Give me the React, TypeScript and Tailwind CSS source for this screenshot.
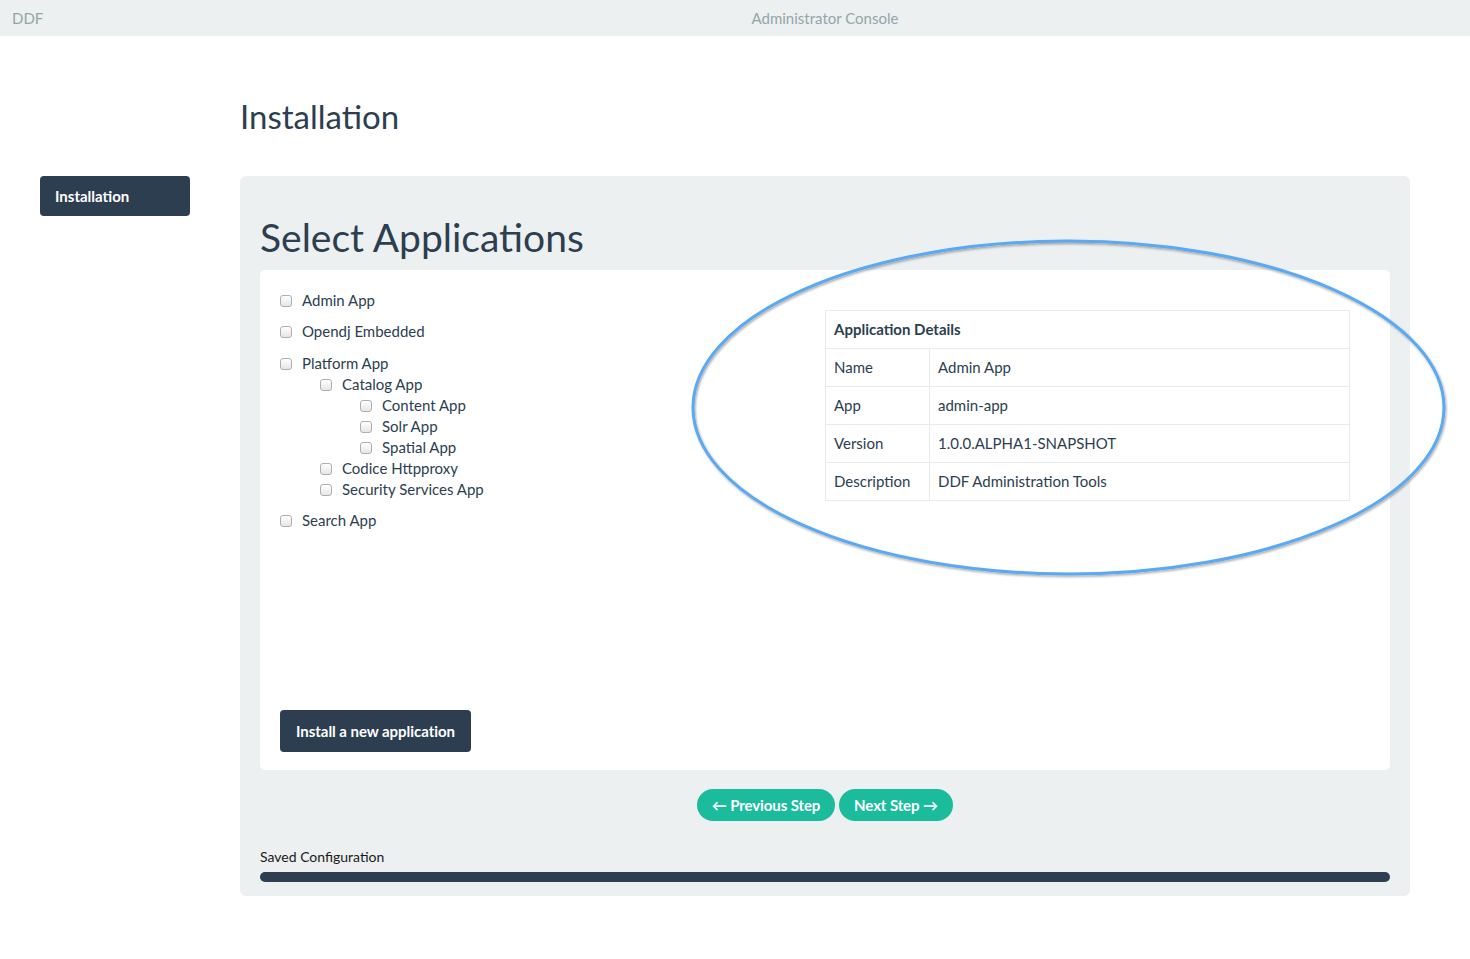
import React from "react";

function Check() {
  return (
    <span className="inline-block w-[12px] h-[12px] shrink-0 rounded-[3px] border border-[#aeaeae] bg-gradient-to-b from-white to-[#e6e6e6] shadow-[inset_0_1px_0_#fff]" />
  );
}

function Item({ label, level = 0 }: { label: string; level?: number }) {
  const pad = level === 0 ? "pl-0" : level === 1 ? "pl-[40px]" : "pl-[80px]";
  return (
    <div className={`flex items-center gap-[10px] h-[21px] ${pad}`}>
      <Check />
      <span className="text-[15px] leading-[21px] text-[#2c3e50]">{label}</span>
    </div>
  );
}

export default function App() {
  const rows: [string, string][] = [
    ["Name", "Admin App"],
    ["App", "admin-app"],
    ["Version", "1.0.0.ALPHA1-SNAPSHOT"],
    ["Description", "DDF Administration Tools"],
  ];
  return (
    <div
      className="relative w-[1470px] min-h-[959px] bg-white text-[#2c3e50]"
      style={{ fontFamily: "Lato, 'Open Sans', sans-serif" }}
    >
      {/* Top bar */}
      <div className="flex h-[36px] items-center bg-[#ecf0f1]">
        <div className="w-[240px] pl-[12px] text-[15px] text-[#95a5a6]">DDF</div>
        <div className="w-[1170px] text-center text-[15px] text-[#95a5a6]">Administrator Console</div>
      </div>

      <h1 className="mt-[60px] pl-[240px] text-[33px] leading-[40px] font-normal text-[#2c3e50]">
        Installation
      </h1>

      <div className="mt-[40px] flex">
        {/* Sidebar */}
        <div className="w-[240px] pl-[40px]">
          <div className="flex h-[40px] w-[150px] items-center rounded-[4px] bg-[#2c3e50] pl-[15px] text-[15px] font-bold text-white">
            Installation
          </div>
        </div>

        {/* Main panel */}
        <div className="w-[1170px] rounded-[6px] bg-[#ecf0f1] px-[20px] pt-[38px] pb-[14px]">
          <h2 className="text-[39px] leading-[46px] font-normal text-[#2c3e50]">Select Applications</h2>

          <div className="mt-[10px] flex h-[500px] flex-col rounded-[5px] bg-white px-[20px] pt-[20px] pb-[18px]">
            <div className="flex">
              <div className="w-[545px] flex flex-col gap-[10px]">
                <Item label="Admin App" />
                <Item label="Opendj Embedded" />
                <div className="pt-[1px]">
                  <Item label="Platform App" />
                  <Item label="Catalog App" level={1} />
                  <Item label="Content App" level={2} />
                  <Item label="Solr App" level={2} />
                  <Item label="Spatial App" level={2} />
                  <Item label="Codice Httpproxy" level={1} />
                  <Item label="Security Services App" level={1} />
                </div>
                <Item label="Search App" />
              </div>

              <div className="mt-[20px] w-[525px]">
                <table className="w-full border-collapse text-[15px] text-[#2c3e50]">
                  <tbody>
                    <tr className="h-[38px]">
                      <th colSpan={2} className="border border-[#e8ebec] px-[8px] text-left font-bold">
                        Application Details
                      </th>
                    </tr>
                    {rows.map(([k, v]) => (
                      <tr key={k} className="h-[38px]">
                        <td className="w-[104px] border border-[#e8ebec] px-[8px]">{k}</td>
                        <td className="border border-[#e8ebec] px-[8px]">{v}</td>
                      </tr>
                    ))}
                  </tbody>
                </table>
              </div>
            </div>

            <div className="mt-auto">
              <button className="flex h-[42px] w-[191px] items-center justify-center rounded-[4px] bg-[#2c3e50] text-[15px] font-bold tracking-[-0.05px] text-white">
                Install a new application
              </button>
            </div>
          </div>

          <div className="mt-[19px] flex justify-center gap-[4px]">
            <button className="flex h-[32px] w-[138px] items-center justify-center rounded-full bg-[#1abc9c] text-[15px] font-bold tracking-[-0.1px] text-white">
              ← Previous Step
            </button>
            <button className="flex h-[32px] w-[114px] items-center justify-center rounded-full bg-[#1abc9c] text-[15px] font-bold tracking-[-0.1px] text-white">
              Next Step →
            </button>
          </div>

          <div className="mt-[27px] text-[14px] leading-[18px] text-[#1a1a1a]">Saved Configuration</div>
          <div className="mt-[6px] h-[10px] w-full rounded-[5px] bg-[#2c3e50]" />
        </div>
      </div>

      {/* Annotation ellipse */}
      <svg
        className="pointer-events-none absolute left-[688px] top-[236px]"
        width="764"
        height="348"
        viewBox="0 0 764 348"
      >
        <defs>
          <filter id="sh" x="-5%" y="-5%" width="110%" height="110%">
            <feDropShadow dx="1" dy="1.5" stdDeviation="1" floodColor="#000" floodOpacity="0.35" />
          </filter>
        </defs>
        <ellipse
          cx="380.5"
          cy="171.5"
          rx="375.5"
          ry="166.5"
          fill="none"
          stroke="#5aa9f2"
          strokeWidth="3"
          filter="url(#sh)"
        />
      </svg>
    </div>
  );
}
